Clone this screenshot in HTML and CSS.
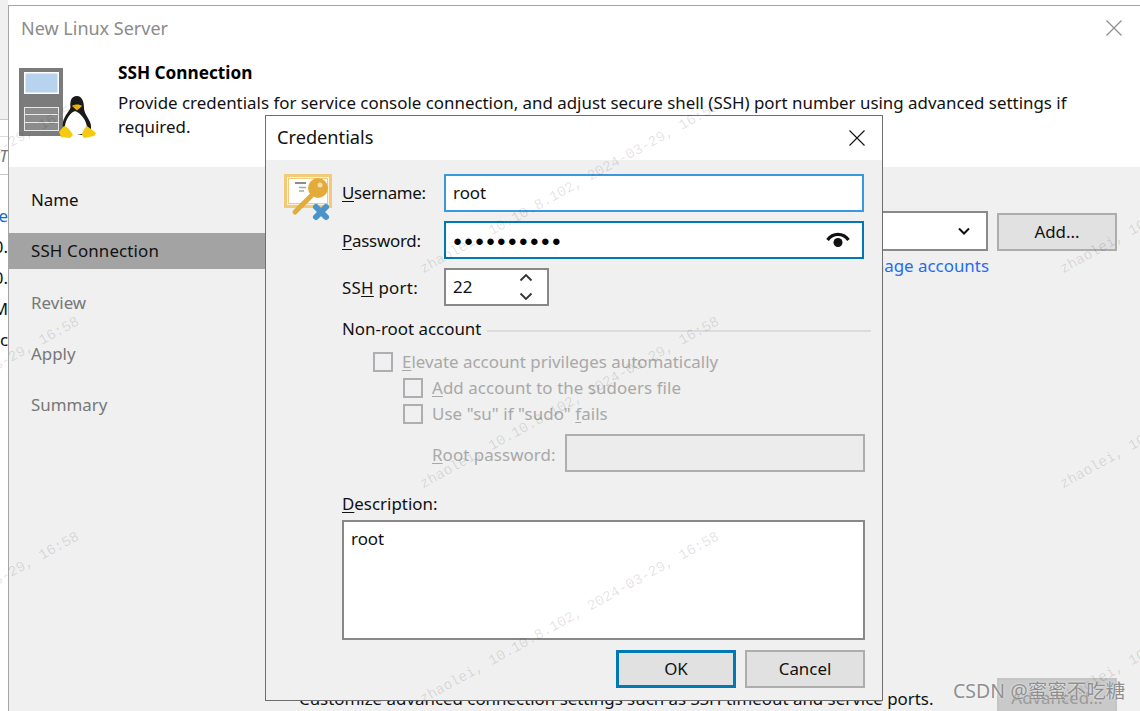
FILE: index.html
```html
<!DOCTYPE html>
<html lang="en">
<head>
<meta charset="utf-8">
<title>New Linux Server</title>
<link rel="stylesheet" href="styles.css">
</head>
<body>
<div class="backdrop">
  <div class="bd-top"></div>
  <div class="bd-row bd-r1"></div>
  <div class="bd-row bd-r2"><i>T</i></div>
  <div class="bd-row bd-link">e</div>
  <div class="bd-row bd-text">0.</div>
  <div class="bd-row bd-text">0.</div>
  <div class="bd-row bd-text">M</div>
  <div class="bd-row bd-text">nc</div>
</div>

<section class="wizard">
  <header class="wizard-title">
    <span>New Linux Server</span>
    <svg class="wizard-close" viewBox="0 0 16 16"><path d="M0.5 0.5L15.5 15.5M15.5 0.5L0.5 15.5"/></svg>
  </header>
  <div class="wizard-head">
    <svg class="server-icon" viewBox="0 0 80 74">
      <rect x="1" y="1" width="44" height="68" fill="#7b7b7b"/>
      <rect x="6" y="5" width="35" height="22" fill="#fff"/>
      <rect x="7.5" y="6.5" width="32" height="19" fill="#b8d3ee"/>
      <rect x="6.500" y="40.500" width="34" height="7" fill="#8c8c8c" stroke="#e8e8e8"/>
      <rect x="6.500" y="47.500" width="34" height="8" fill="#8c8c8c" stroke="#e8e8e8"/>
      <rect x="6.500" y="55.500" width="34" height="8" fill="#8c8c8c" stroke="#e8e8e8"/>
      <path d="M59 29c-6 0-7 5-6.500 11 .2 3-6 8-7.500 15-1 4 0 9 3 13h22c3-3 4-8 2-13-2-5-6-9-6-14 0-6-2-12-7-12z" fill="#1a1a1a"/>
      <path d="M57 44c-6 2-11 12-10 18 .5 4 4 6 10 6s12-2 12-7c0-7-6-15-12-17z" fill="#fff"/>
      <path d="M54 39c2-2 8-2 10 0l-5 4.500z" fill="#f2b705"/>
      <path d="M41 65l5-6c3 0 7 5 9 9l-3 3-9-1zM64 68c1-4 3-8 5-9l9 7-2 3-10 2z" fill="#f7c90f"/>
    </svg>
    <div class="wizard-copy">
      <h1>SSH Connection</h1>
      <p>Provide credentials for service console connection, and adjust secure shell (SSH) port number using advanced settings if required.</p>
    </div>
  </div>
  <div class="wizard-body">
    <nav class="steps">
      <div class="step">Name</div>
      <div class="step step-on">SSH Connection</div>
      <div class="step step-off">Review</div>
      <div class="step step-off">Apply</div>
      <div class="step step-off">Summary</div>
    </nav>
    <main class="page">
      <div class="account-row">
        <div class="combo"><svg class="combo-arrow" viewBox="0 0 12 8"><path d="M1 1.500L6 6.500L11 1.500"/></svg></div>
        <button class="btn">Add...</button>
      </div>
      <a class="manage">Manage accounts</a>
      <div class="page-foot">
        <span class="foot-text">Customize advanced connection settings such as SSH timeout and service ports.</span>
        <button class="btn btn-off">Advanced...</button>
      </div>
    </main>
  </div>
</section>

<section class="dialog">
  <header class="dialog-title">
    <span>Credentials</span>
    <svg class="dialog-close" viewBox="0 0 16 16"><path d="M0.500 0.500L15.500 15.500M15.500 0.500L0.500 15.500"/></svg>
  </header>
  <div class="dialog-body">
    <svg class="key-icon" viewBox="0 0 50 50">
      <rect x="1.500" y="1.500" width="45" height="31" fill="#fdf3dc" stroke="#f2cb7a" stroke-width="3"/>
      <rect x="4.500" y="4.500" width="39" height="25" fill="#fff" stroke="#f2cb7a"/>
      <path d="M11 9h11" stroke="#8c8c8c" stroke-width="2"/>
      <path d="M15 13.500h7M15 17h5" stroke="#a8a8a8" stroke-width="1.500"/>
      <path d="M11 38L27 22" stroke="#e3ac3a" stroke-width="5" stroke-linecap="round"/>
      <circle cx="34" cy="14" r="10" fill="#e3ac3a"/>
      <circle cx="36" cy="11" r="2.500" fill="#f6dfa8"/>
      <path d="M32 33L42 43M42 33L32 43" stroke="#4a94c9" stroke-width="6" stroke-linecap="round"/>
    </svg>
    <div class="form">
      <div class="field"><label class="field-label lab-user"><u>U</u>sername:</label><div class="input input-user">root</div></div>
      <div class="field"><label class="field-label lab-pass"><u>P</u>assword:</label>
        <div class="input input-pass"><span class="dots">●●●●●●●●●●</span>
          <svg class="eye" viewBox="0 0 24 16"><path d="M1.500 8C7 .5 17 .5 22.500 8" /><circle cx="12" cy="10.500" r="4.500"/></svg>
        </div>
      </div>
      <div class="field"><label class="field-label lab-port">SS<u>H</u> port:</label>
        <div class="input input-port"><span>22</span>
          <svg class="spin" viewBox="0 0 14 28"><path d="M1.500 7.500L7 2L12.500 7.500M1.500 20.500L7 26L12.500 20.500"/></svg>
        </div>
      </div>
      <div class="group-head"><span>Non-root account</span><span class="group-rule"></span></div>
      <div class="check"><span class="box"></span><span class="off"><u>E</u>levate account privileges automatically</span></div>
      <div class="check check-sub"><span class="box"></span><span class="off tight"><u>A</u>dd account to the sudoers file</span></div>
      <div class="check check-sub"><span class="box"></span><span class="off tight">Use "su" if "sudo" <u>f</u>ails</span></div>
      <div class="root-row"><span class="off root-label"><u>R</u>oot password:</span><div class="root-input"></div></div>
      <label class="desc-label"><u>D</u>escription:</label>
      <div class="desc">root</div>
      <div class="actions">
        <button class="btn btn-default">OK</button>
        <button class="btn">Cancel</button>
      </div>
    </div>
  </div>
</section>

<div class="wm wm-a1">zhaolei, 10.10.8.102, 2024-03-29, 16:58</div>
<div class="wm wm-a2">zhaolei, 10.10.8.102, 2024-03-29, 16:58</div>
<div class="wm wm-a3">zhaolei, 10.10.8.102, 2024-03-29, 16:58</div>
<div class="wm wm-b1">zhaolei, 10.10.8.102, 2024-03-29, 16:58</div>
<div class="wm wm-b2">zhaolei, 10.10.8.102, 2024-03-29, 16:58</div>
<div class="wm wm-b3">zhaolei, 10.10.8.102, 2024-03-29, 16:58</div>
<div class="wm wm-c1">zhaolei, 10.10.8.102, 2024-03-29, 16:58</div>
<div class="wm wm-c2">zhaolei, 10.10.8.102, 2024-03-29, 16:58</div>
<div class="wm wm-c3">zhaolei, 10.10.8.102, 2024-03-29, 16:58</div>
<div class="csdn">CSDN @蜜蜜不吃糖</div>
</body>
</html>
```
FILE: styles.css
```css
* { box-sizing: border-box; }
html, body { margin: 0; padding: 0; }
body {
  position: relative;
  width: 1140px;
  height: 711px;
  overflow: hidden;
  background: #fff;
  color: #111;
  font-family: "Noto Sans", "Open Sans", sans-serif;
  font-size: 16.900px;
  line-height: 24px;
}
u { text-underline-offset: 2px; }

/* window behind the wizard */
.backdrop { position: absolute; left: 0; top: 0; width: 8px; height: 711px; overflow: hidden; background: #fff; }
.bd-top { height: 120px; background: #f0f0f0; border-bottom: 1px solid #c8c8c8; }
.bd-row { height: 30px; display: flex; justify-content: flex-end; align-items: center; white-space: nowrap; }
.bd-r1 { height: 17px; border-bottom: 1px solid #dcdcdc; }
.bd-r2 { height: 38px; border-bottom: 1px solid #c8c8c8; color: #777; }
.bd-link { height: 56px; padding-top: 26px; color: #0b6fc9; }
.bd-text { height: 31px; }

/* wizard */
.wizard {
  position: absolute;
  left: 8px;
  top: 5px;
  width: 1150px;
  height: 720px;
  display: flex;
  flex-direction: column;
  border: 1px solid #a5a5a5;
  background: #fff;
}
.wizard-title {
  height: 44px;
  padding: 10px 35px 0 12px;
  display: flex;
  justify-content: space-between;
  color: #8b8b8b;
  font-size: 18px;
}
.wizard-close { width: 16px; height: 16px; margin-top: 4px; fill: none; stroke: #8f8f8f; stroke-width: 1.2; }
.wizard-head { height: 117px; display: flex; padding: 11px 0 0 9px; }
.server-icon { width: 80px; height: 74px; flex: none; margin-top: 6px; }
.wizard-copy { margin-left: 20px; width: 960px; }
.wizard-copy h1 { margin: 0; font-size: 17.200px; line-height: 24px; font-weight: 700; color: #000; }
.wizard-copy p { margin: 6px 0 0; line-height: 24px; }
.wizard-body { flex: 1; display: flex; background: #f0f0f0; }
.steps { width: 256px; flex: none; padding-top: 15px; display: flex; flex-direction: column; gap: 16px; }
.step { height: 35px; padding-left: 22px; display: flex; align-items: center; }
.step-on { background: #a3a3a3; height: 36px; letter-spacing: 0.150px; }
.step-off { color: #777; }
.page { flex: 1; display: flex; flex-direction: column; padding: 44px 0 0 34px; height: 551px; }
.account-row { display: flex; width: 818px; gap: 9px; align-items: flex-end; }
.combo { flex: 1; height: 40px; background: #fff; border: 2px solid #8a8a8a; display: flex; justify-content: flex-end; align-items: center; padding-right: 16px; }
.combo-arrow { width: 12px; height: 8px; fill: none; stroke: #111; stroke-width: 2; }
.btn {
  width: 120px;
  height: 38px;
  flex: none;
  padding: 0;
  background: #e1e1e1;
  border: 2px solid #adadad;
  color: #111;
  font: inherit;
}
.manage { width: 690px; margin-top: 3px; text-align: right; color: #1f6cf0; }
.page-foot { margin-top: auto; display: flex; width: 818px; justify-content: space-between; align-items: flex-start; }
.foot-text { margin-top: 9px; }
.btn-off { background: #c9c9c9; border-color: #c4c4c4; color: #9a9a9a; height: 40px; }

/* credentials dialog */
.dialog {
  position: absolute;
  left: 265px;
  top: 115px;
  width: 618px;
  height: 586px;
  display: flex;
  flex-direction: column;
  border: 1px solid #6e6e6e;
  background: #f0f0f0;
}
.dialog-title {
  height: 44px;
  flex: none;
  padding: 9px 17px 0 11px;
  display: flex;
  justify-content: space-between;
  background: #fff;
  font-size: 18.200px;
}
.dialog-close { width: 16px; height: 16px; margin-top: 5px; fill: none; stroke: #111; stroke-width: 1.1; }
.dialog-body { flex: 1; display: flex; padding: 14px 0 0 18px; }
.key-icon { width: 50px; height: 50px; flex: none; }
.form { width: 529px; margin-left: 8px; }
.field { display: flex; align-items: center; margin-bottom: 9px; }
.field-label { width: 102px; flex: none; }
.lab-user { letter-spacing: -0.350px; }
.lab-pass { letter-spacing: -0.250px; margin-top: 2px; }
.lab-port { letter-spacing: 0.250px; margin-top: 2px; }
.input { height: 38px; width: 420px; display: flex; align-items: center; justify-content: space-between; padding: 0 9px 0 7px; background: #fff; border: 2px solid #888; }
.input-user { border-color: #3b98dc; }
.input-pass { border-color: #0078b4; }
.dots { font-size: 15px; letter-spacing: 1.900px; color: #000; }
.eye { width: 24px; height: 16px; flex: none; margin-right: 3px; }
.eye path { fill: none; stroke: #111; stroke-width: 3.200; }
.eye circle { fill: #111; }
.input-port { width: 105px; height: 38px; padding-right: 14px; }
.spin { width: 14px; height: 28px; fill: none; stroke: #333; stroke-width: 1.800; }
.group-head { display: flex; align-items: center; gap: 6px; margin-top: 11px; height: 24px; width: 529px; }
.group-rule { flex: 1; height: 2px; margin-top: 4px; background: #dcdcdc; }
.check { display: flex; align-items: center; gap: 9px; height: 26px; padding-left: 31px; }
.group-head + .check { margin-top: 8px; }
.check-sub { padding-left: 61px; }
.box { width: 20px; height: 20px; flex: none; border: 2px solid #adadb2; }
.off { color: #a8a8a8; white-space: nowrap; }
.tight { letter-spacing: 0.080px; }
.root-row { display: flex; align-items: center; gap: 9px; padding-left: 90px; margin-top: 7px; width: 523px; }
.root-label { margin-top: 3px; letter-spacing: 0.080px; }
.root-input { flex: 1; height: 38px; border: 2px solid #adadb2; background: #ececec; }
.desc-label { display: block; margin-top: 20px; height: 24px; }
.desc { width: 523px; height: 120px; margin-top: 4px; padding: 5px 7px; background: #fff; border: 2px solid #888; }
.actions { display: flex; justify-content: flex-end; gap: 9px; width: 523px; margin-top: 10px; }
.btn-default { border-color: #0078b4; width: 120px; border-width: 3px; }

/* watermarks and stamp */
.wm {
  position: absolute;
  white-space: nowrap;
  font-family: "Liberation Mono", monospace;
  font-size: 14.500px;
  line-height: 16px;
  color: rgba(0, 0, 0, 0.12);
  transform: rotate(-29deg);
  transform-origin: left bottom;
  pointer-events: none;
}
.wm-a1 { left: -215px; top: 261px; }
.wm-a2 { left: -215px; top: 476px; }
.wm-a3 { left: -215px; top: 691px; }
.wm-b1 { left: 425px; top: 261px; }
.wm-b2 { left: 425px; top: 476px; }
.wm-b3 { left: 425px; top: 691px; }
.wm-c1 { left: 1065px; top: 261px; }
.wm-c2 { left: 1065px; top: 476px; }
.wm-c3 { left: 1065px; top: 691px; }
.csdn {
  position: absolute;
  left: 953px;
  top: 679px;
  white-space: nowrap;
  font-family: "Noto Sans", "Noto Sans CJK SC", sans-serif;
  font-size: 19.500px;
  line-height: 24px;
  color: #8f8f8f;
  text-shadow: 0 0 2px #fff;
}
```
